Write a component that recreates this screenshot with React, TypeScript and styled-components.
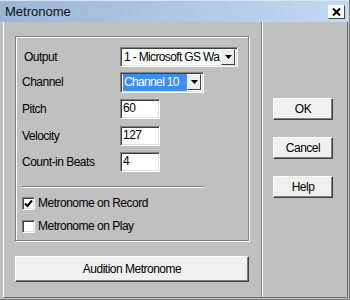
import React from 'react';
import styled, { createGlobalStyle } from 'styled-components';

const Global = createGlobalStyle`
  html, body { margin: 0; padding: 0; background: #c0c0c0; }
  body { font-family: "Liberation Sans", Arial, sans-serif; font-size: 12px; color: #000; }
`;

const Window = styled.div`
  width: 350px;
  height: 300px;
  box-sizing: border-box;
  background: #c0c0c0;
  display: flex;
  flex-direction: column;
  border-right: 1px solid #7a7a7a;
  border-bottom: 1px solid #7a7a7a;
`;

const TitleBar = styled.div`
  height: 22px;
  flex: none;
  display: flex;
  align-items: center;
  justify-content: space-between;
  padding: 0 4px 0 5px;
  background: linear-gradient(90deg, #9bb5d5 0%, #b1c9e4 55%, #c3d9f0 100%);
  border-top: 1px solid #d6e3f1;
  box-sizing: border-box;
`;

const Title = styled.span`
  font-size: 13px;
  color: #111;
`;

const CloseBox = styled.div`
  width: 17px;
  height: 14px;
  box-sizing: border-box;
  background: #f7f7f7;
  border: 1px solid;
  border-color: #fff #404040 #404040 #fff;
  display: flex;
  align-items: center;
  justify-content: center;
`;

const Frame = styled.div`
  flex: 1;
  display: flex;
  margin: 0 1px 1px 3px;
  border-left: 1px solid #fff;
  border-right: 1px solid #6d6d6d;
  border-bottom: 1px solid #6d6d6d;
`;

const LeftPane = styled.div`
  width: 257px;
  flex: none;
  padding: 14px 0 0 11px;
  box-sizing: border-box;
`;

const Divider = styled.div`
  width: 2px;
  flex: none;
  border-left: 1px solid #808080;
  border-right: 1px solid #fff;
  box-sizing: border-box;
`;

const RightPane = styled.div`
  flex: 1;
  display: flex;
  flex-direction: column;
  gap: 17px;
  padding: 76px 0 0 10px;
`;

const Group = styled.div`
  width: 234px;
  height: 205px;
  box-sizing: border-box;
  border: 1px solid #808080;
  box-shadow: inset 1px 1px #fff, 1px 1px #fff;
  padding: 10px 0 0 6px;
`;

const Row = styled.div<{ $gap?: number }>`
  display: flex;
  align-items: center;
  height: 20px;
  margin-top: ${(p) => p.$gap ?? 0}px;
`;

const Label = styled.span<{ $indent?: number }>`
  width: 98px;
  padding-left: ${(p) => p.$indent ?? 0}px;
  box-sizing: border-box;
  letter-spacing: -0.5px;
`;

const Sunken = styled.div<{ $w: number; $h?: number }>`
  width: ${(p) => p.$w}px;
  height: ${(p) => p.$h ?? 20}px;
  box-sizing: border-box;
  background: #fff;
  border: 1px solid;
  border-color: #808080 #fff #fff #808080;
  box-shadow: inset 1px 1px #404040, inset -1px -1px #dfdfdf;
  display: flex;
  align-items: center;
  padding: 0 2px 0 2px;
  overflow: hidden;
  white-space: nowrap;
  letter-spacing: -0.5px;
`;

const ComboText = styled.span<{ $selected?: boolean }>`
  flex: 1;
  overflow: hidden;
  align-self: stretch;
  display: flex;
  align-items: center;
  padding-left: ${(p) => (p.$selected ? 1 : 1)}px;
  margin: 1px 0;
  letter-spacing: -0.65px;
  background: ${(p) => (p.$selected ? '#3a8ff0' : 'transparent')};
  color: ${(p) => (p.$selected ? '#fff' : '#000')};
`;

const DropBtn = styled.div`
  width: 14px;
  height: 16px;
  flex: none;
  box-sizing: border-box;
  background: #ededed;
  border: 1px solid;
  border-color: #fff #404040 #404040 #fff;
  display: flex;
  align-items: center;
  justify-content: center;
`;

const FieldText = styled.span`
  margin-top: -3px;
`;

const Rule = styled.div`
  width: 182px;
  height: 2px;
  margin-top: 14px;
  border-top: 1px solid #808080;
  border-bottom: 1px solid #fff;
  box-sizing: border-box;
`;

const CheckRow = styled.label<{ $gap: number }>`
  display: flex;
  align-items: center;
  gap: 3px;
  height: 14px;
  margin-top: ${(p) => p.$gap}px;
  letter-spacing: -0.5px;
`;

const Box = styled.span`
  width: 13px;
  height: 13px;
  box-sizing: border-box;
  background: #fff;
  border: 1px solid;
  border-color: #808080 #fff #fff #808080;
  box-shadow: inset 1px 1px #404040, inset -1px -1px #dfdfdf;
  display: flex;
  align-items: center;
  justify-content: center;
`;

const Button = styled.div<{ $w: number; $h: number }>`
  width: ${(p) => p.$w}px;
  height: ${(p) => p.$h}px;
  box-sizing: border-box;
  background: #f0f0f0;
  border: 1px solid;
  border-color: #fff #404040 #404040 #fff;
  box-shadow: inset -1px -1px #808080;
  display: flex;
  align-items: center;
  justify-content: center;
  letter-spacing: -0.5px;
`;

const Audition = styled(Button)`
  margin-top: 15px;
`;

function Arrow() {
  return (
    <svg width="7" height="4" viewBox="0 0 7 4">
      <path d="M0 0h7L3.5 4z" fill="#000" />
    </svg>
  );
}

function Combo({ w, h, value, selected }: { w: number; h?: number; value: string; selected?: boolean }) {
  return (
    <Sunken $w={w} $h={h}>
      <ComboText $selected={selected}>{value}</ComboText>
      <DropBtn>
        <Arrow />
      </DropBtn>
    </Sunken>
  );
}

function Check({ checked, label, gap }: { checked?: boolean; label: string; gap: number }) {
  return (
    <CheckRow $gap={gap}>
      <Box>
        {checked && (
          <svg width="9" height="9" viewBox="0 0 9 9">
            <path d="M1 4.5l2.5 2.5L8 1.5" stroke="#000" strokeWidth="2" fill="none" />
          </svg>
        )}
      </Box>
      {label}
    </CheckRow>
  );
}

export default function App() {
  return (
    <Window>
      <Global />
      <TitleBar>
        <Title>Metronome</Title>
        <CloseBox>
          <svg width="9" height="8" viewBox="0 0 9 8">
            <path d="M1 0.5l7 7M8 0.5l-7 7" stroke="#000" strokeWidth="2" />
          </svg>
        </CloseBox>
      </TitleBar>
      <Frame>
        <LeftPane>
          <Group>
            <Row>
              <Label $indent={2}>Output</Label>
              <Combo w={118} value="1 - Microsoft GS Wa" />
            </Row>
            <Row $gap={5}>
              <Label>Channel</Label>
              <Combo w={84} h={21} value="Channel 10" selected />
            </Row>
            <Row $gap={7}>
              <Label>Pitch</Label>
              <Sunken $w={40}><FieldText>60</FieldText></Sunken>
            </Row>
            <Row $gap={7}>
              <Label>Velocity</Label>
              <Sunken $w={40}><FieldText>127</FieldText></Sunken>
            </Row>
            <Row $gap={6}>
              <Label>Count-in Beats</Label>
              <Sunken $w={40}><FieldText>4</FieldText></Sunken>
            </Row>
            <Rule />
            <Check checked label="Metronome on Record" gap={8} />
            <Check label="Metronome on Play" gap={9} />
          </Group>
          <Audition $w={234} $h={26}>Audition Metronome</Audition>
        </LeftPane>
        <Divider />
        <RightPane>
          <Button $w={60} $h={22}>OK</Button>
          <Button $w={60} $h={22}>Cancel</Button>
          <Button $w={60} $h={22}>Help</Button>
        </RightPane>
      </Frame>
    </Window>
  );
}
